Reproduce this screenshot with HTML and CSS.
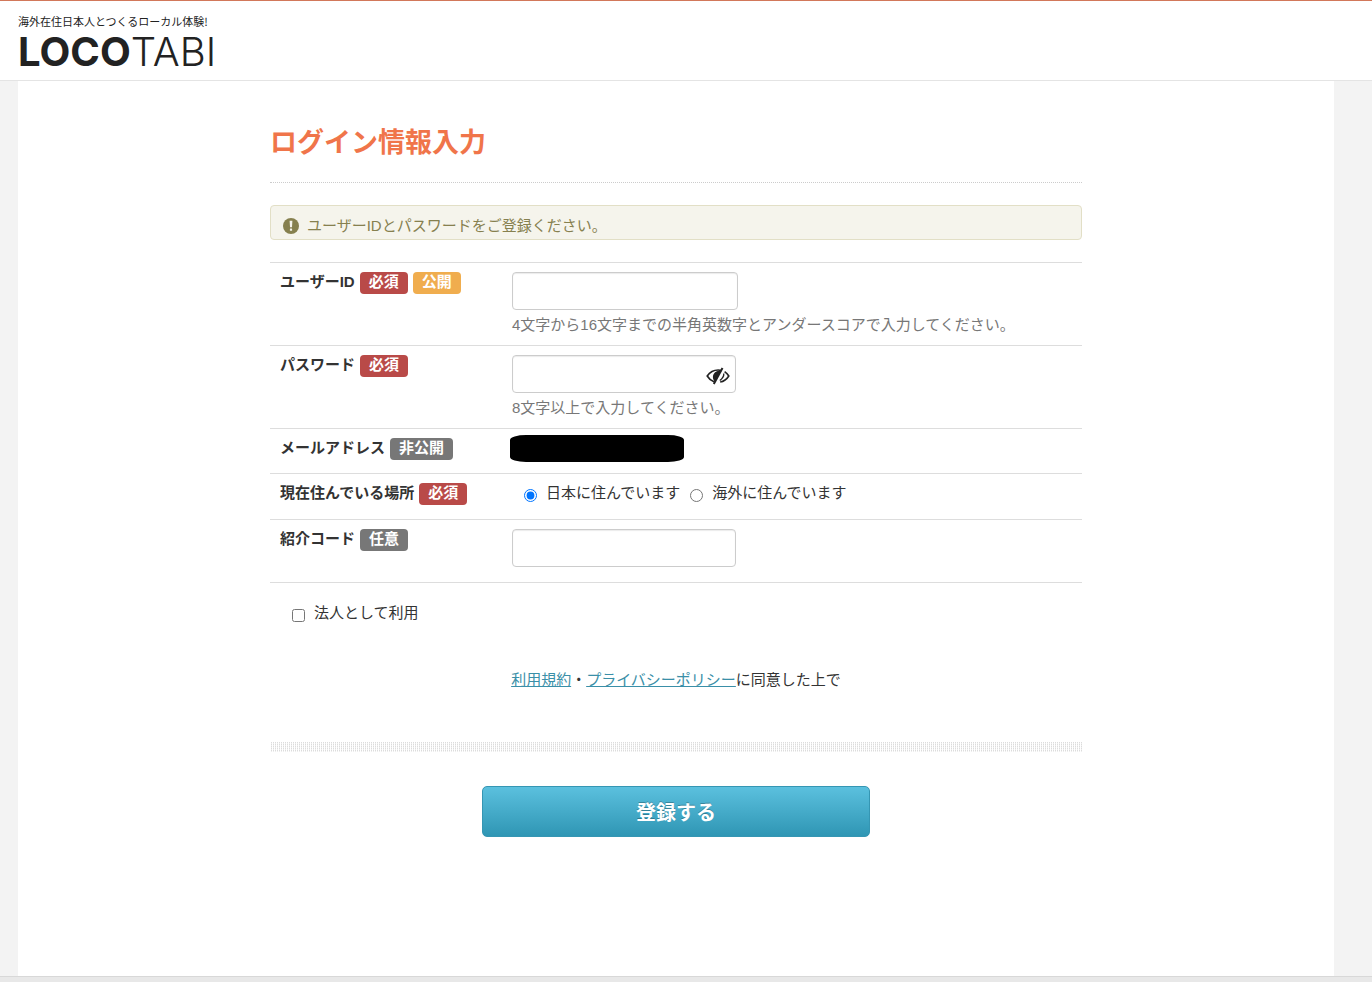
FILE: index.html
```html
<!DOCTYPE html>
<html lang="ja">

<head>
    <meta charset="UTF-8" />
    <meta name="viewport" content="width=device-width, initial-scale=1.0" />
    <title>ログイン情報入力 | LOCOTABI</title>
    <link rel="stylesheet" href="styles.css">
</head>

<body>
    <header class="header">
        <a class="brand" href="#">
            <span class="tagline">海外在住日本人とつくるローカル体験!</span>
            <span class="logo"><b>LOCO</b>TABI</span>
        </a>
    </header>

    <main class="page">
        <div class="container">
            <h1>ログイン情報入力</h1>

            <p class="notice">
                <svg class="notice-icon" viewBox="0 0 16 16" aria-hidden="true">
                    <circle cx="8" cy="8" r="8" fill="#86804f" />
                    <path d="M6.600 2.800h2.800l-.4 6.400H7z" fill="#f5f4ec" />
                    <rect x="6.900" y="10.600" width="2.200" height="2.200" rx=".4" fill="#f5f4ec" />
                </svg>
                ユーザーIDとパスワードをご登録ください。
            </p>

            <form>
                <div class="form-row">
                    <div class="form-label">
                        <label for="userid">ユーザーID</label>
                        <span class="badge required">必須</span>
                        <span class="badge public">公開</span>
                    </div>
                    <div class="form-field">
                        <input class="text-input wide" type="text" name="userid" id="userid" />
                        <p class="help">4文字から16文字までの半角英数字とアンダースコアで入力してください。</p>
                    </div>
                </div>
                <div class="form-row">
                    <div class="form-label">
                        <label for="password">パスワード</label>
                        <span class="badge required">必須</span>
                    </div>
                    <div class="form-field">
                        <div class="password-box">
                            <input class="text-input" type="password" name="password" id="password" />
                            <button type="button" class="toggle" id="toggle" aria-label="パスワードを表示">
                                <svg viewBox="0 0 24 18" fill="none" stroke="#222" stroke-width="1.600">
                                    <path d="M8 14.800C5 13.600 2.600 11.400 1.200 9c2.600-3.800 6.400-6 11-6 1.400 0 2.600.2 3.600.5" />
                                    <path d="M18.600 4.600C20.400 5.800 21.800 7.200 22.800 9c-2 3.200-4.800 5.400-8.600 6" />
                                    <path d="M15.500 3.500L9 14.500C6.500 12.500 6.300 8.500 8.200 6.200 9.800 4.200 12.500 3.200 15.500 3.500z" fill="#222" stroke="none" />
                                    <path d="M16.500 1L7.800 17" stroke-width="2" />
                                    <path d="M17.800 6.500c.2 2.600-1 4.800-4 7" stroke-width="1.300" />
                                </svg>
                            </button>
                        </div>
                        <p class="help">8文字以上で入力してください。</p>
                    </div>
                </div>
                <div class="form-row">
                    <div class="form-label">
                        <span>メールアドレス</span>
                        <span class="badge private">非公開</span>
                    </div>
                    <div class="form-field">
                        <div class="masked"></div>
                    </div>
                </div>
                <div class="form-row">
                    <div class="form-label">
                        <span id="place-label">現在住んでいる場所</span>
                        <span class="badge required">必須</span>
                    </div>
                    <div class="form-field choices" role="radiogroup" aria-labelledby="place-label">
                        <label class="choice"><input type="radio" name="place" value="japan" checked />日本に住んでいます</label>
                        <label class="choice"><input type="radio" name="place" value="overseas" />海外に住んでいます</label>
                    </div>
                </div>
                <div class="form-row last">
                    <div class="form-label">
                        <label for="code">紹介コード</label>
                        <span class="badge private">任意</span>
                    </div>
                    <div class="form-field">
                        <input class="text-input" type="text" name="code" id="code" />
                    </div>
                </div>

                <label class="choice company"><input type="checkbox" name="company" />法人として利用</label>

                <p class="terms"><a href="#">利用規約</a>・<a href="#">プライバシーポリシー</a>に同意した上で</p>

                <div class="divider"></div>

                <button type="submit" class="submit">登録する</button>
            </form>
        </div>
    </main>

    <footer class="footer"></footer>

    <script>
        const toggle = document.getElementById("toggle");
        toggle.addEventListener("click", () => {
            const password = document.getElementById("password");
            password.type = password.type === "password" ? "text" : "password";
        });
    </script>
</body>

</html>
```

FILE: styles.css
```css
* {
    box-sizing: border-box;
}

body {
    display: flex;
    flex-direction: column;
    min-height: 100vh;
    margin: 0;
    background-color: #f3f3f3;
    color: #333;
    font-family: "Liberation Sans", "Noto Sans CJK JP", sans-serif;
    font-size: 15px;
    line-height: 20px;
}

.header {
    display: flex;
    padding: 13px 18px 8px;
    border-top: 1px solid #d2785a;
    border-bottom: 1px solid #e4e4e4;
    background-color: white;
}

.brand {
    display: flex;
    flex-direction: column;
    gap: 4px;
    color: #222;
    text-decoration: none;
}

.tagline {
    font-family: "Noto Sans CJK JP", sans-serif;
    font-size: 11px;
    line-height: 14px;
}

.logo {
    display: flex;
    font-family: Inter, sans-serif;
    font-size: 40px;
    font-weight: 300;
    line-height: 40px;
}

.logo b {
    font-weight: 700;
}

.page {
    flex: 1;
    margin: 0 38px 0 18px;
    padding: 0 16px;
    background-color: white;
}

.container {
    max-width: 812px;
    margin: 0 auto;
    padding: 44px 0 60px;
}

h1 {
    margin: 0 0 22px;
    padding-bottom: 20px;
    border-bottom: 1px dotted #ccc;
    color: #f0754a;
    font-size: 27px;
    line-height: 37px;
}

.notice {
    display: flex;
    align-items: center;
    gap: 8px;
    margin: 0 0 22px;
    padding: 10px 12px 3px;
    border: 1px solid #e2dfc6;
    border-radius: 4px;
    background-color: #f5f4ec;
    color: #86804f;
}

.notice-icon {
    width: 16px;
    height: 16px;
}

.form-row {
    display: flex;
    padding: 9px 10px 10px;
    border-top: 1px solid #ddd;
}

.form-row.last {
    padding-bottom: 15px;
    border-bottom: 1px solid #ddd;
}

.form-label {
    display: flex;
    align-items: flex-start;
    gap: 5px;
    width: 232px;
    font-weight: bold;
}

.badge {
    height: 22px;
    padding: 0 9px;
    border-radius: 4px;
    color: white;
}

.required {
    background-color: #b94a48;
}

.public {
    background-color: #f0ad4e;
}

.private {
    background-color: #777;
}

.text-input {
    display: block;
    width: 224px;
    height: 38px;
    padding: 6px 12px;
    border: 1px solid #ccc;
    border-radius: 4px;
    box-shadow: inset 0 1px 1px rgba(0, 0, 0, 0.08);
    font-size: 15px;
}

.text-input.wide {
    width: 226px;
}

.password-box {
    position: relative;
    width: 224px;
}

.toggle {
    position: absolute;
    top: 12px;
    right: 6px;
    width: 24px;
    height: 18px;
    padding: 0;
    border: none;
    background: none;
    cursor: pointer;
}

.toggle svg {
    display: block;
}

.help {
    margin: 5px 0 0;
    color: #777;
}

.masked {
    width: 174px;
    height: 27px;
    margin: -3px 0 1px -2px;
    border-radius: 16px / 5px;
    background-color: black;
}

.choices {
    display: flex;
    gap: 10px;
    padding: 0 12px 6px;
}

.choice {
    display: flex;
    align-items: center;
    gap: 9px;
}

.choice input {
    width: 13px;
    height: 13px;
    margin: 4px 0 0;
}

.company {
    padding: 20px 22px 0;
}

.terms {
    margin: 47px 0 52px;
    text-align: center;
}

.terms a {
    color: #3a8fa8;
    text-decoration: underline;
}

.divider {
    height: 10px;
    background:
        repeating-linear-gradient(90deg, white 0 1px, transparent 1px 2px),
        repeating-linear-gradient(#dcdcdc 0 1px, #eee 1px 2px);
}

.submit {
    display: block;
    width: 388px;
    max-width: 100%;
    height: 51px;
    margin: 34px auto 0;
    border: 1px solid #3596b3;
    border-radius: 5px;
    background: linear-gradient(#5bc0de, #2f96b4);
    color: white;
    font-family: inherit;
    font-size: 20px;
    font-weight: bold;
    text-shadow: 0 -1px 0 rgba(0, 0, 0, 0.25);
    cursor: pointer;
}

.submit:hover {
    background: #2f96b4;
}

.footer {
    height: 6px;
    border-top: 1px solid #d8d8d8;
    background-color: #e8e8e8;
}
```
